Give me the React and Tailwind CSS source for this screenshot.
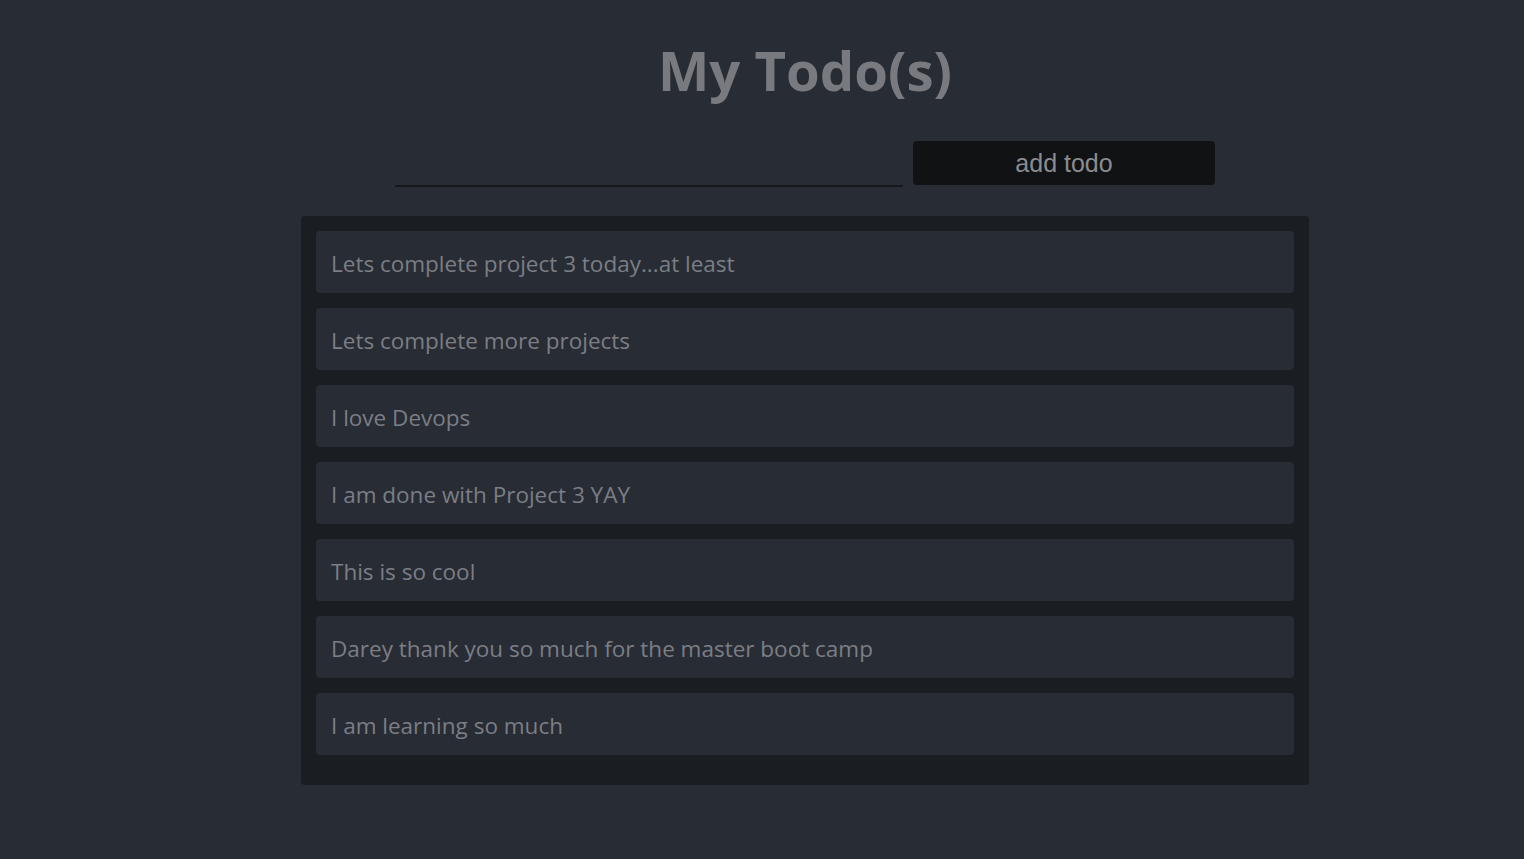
const todos = [
  'Lets complete project 3 today...at least',
  'Lets complete more projects',
  'I love Devops',
  'I am done with Project 3 YAY',
  'This is so cool',
  'Darey thank you so much for the master boot camp',
  'I am learning so much',
];

export default function App() {
  return (
    <div className="min-h-[859px] bg-[#282c34] font-['Open_Sans',sans-serif] text-[#7b7e85]">
      <div className="flex flex-col items-center pt-[37px]">
        <h1 className="pl-[86px] text-[54.5px] leading-[66px] font-bold text-[#787a80]">My Todo(s)</h1>
        <div className="mt-[37px] flex items-start gap-[10px] pl-[86px]">
          <input
            type="text"
            className="h-[47px] w-[508px] border-b-2 border-[#16181c] bg-transparent px-2 text-[22px] text-[#7b7e85] outline-none"
          />
          <button className="mt-[1px] h-[44px] w-[302px] rounded-[4px] bg-[#111214] pt-[2px] font-['Liberation_Sans',Arial,sans-serif] text-[25px] text-[#8a8c90]">
            add todo
          </button>
        </div>
        <ul className="mt-[29px] ml-[86px] flex w-[1008px] flex-col gap-[15px] rounded-[4px] bg-[#1a1d22] px-[15px] pt-[15px] pb-[30px]">
          {todos.map((todo) => (
            <li
              key={todo}
              className="flex h-[62px] items-center rounded-[4px] bg-[#282c34] px-[15px] pt-[4px] text-[22.5px]"
            >
              {todo}
            </li>
          ))}
        </ul>
      </div>
    </div>
  );
}
